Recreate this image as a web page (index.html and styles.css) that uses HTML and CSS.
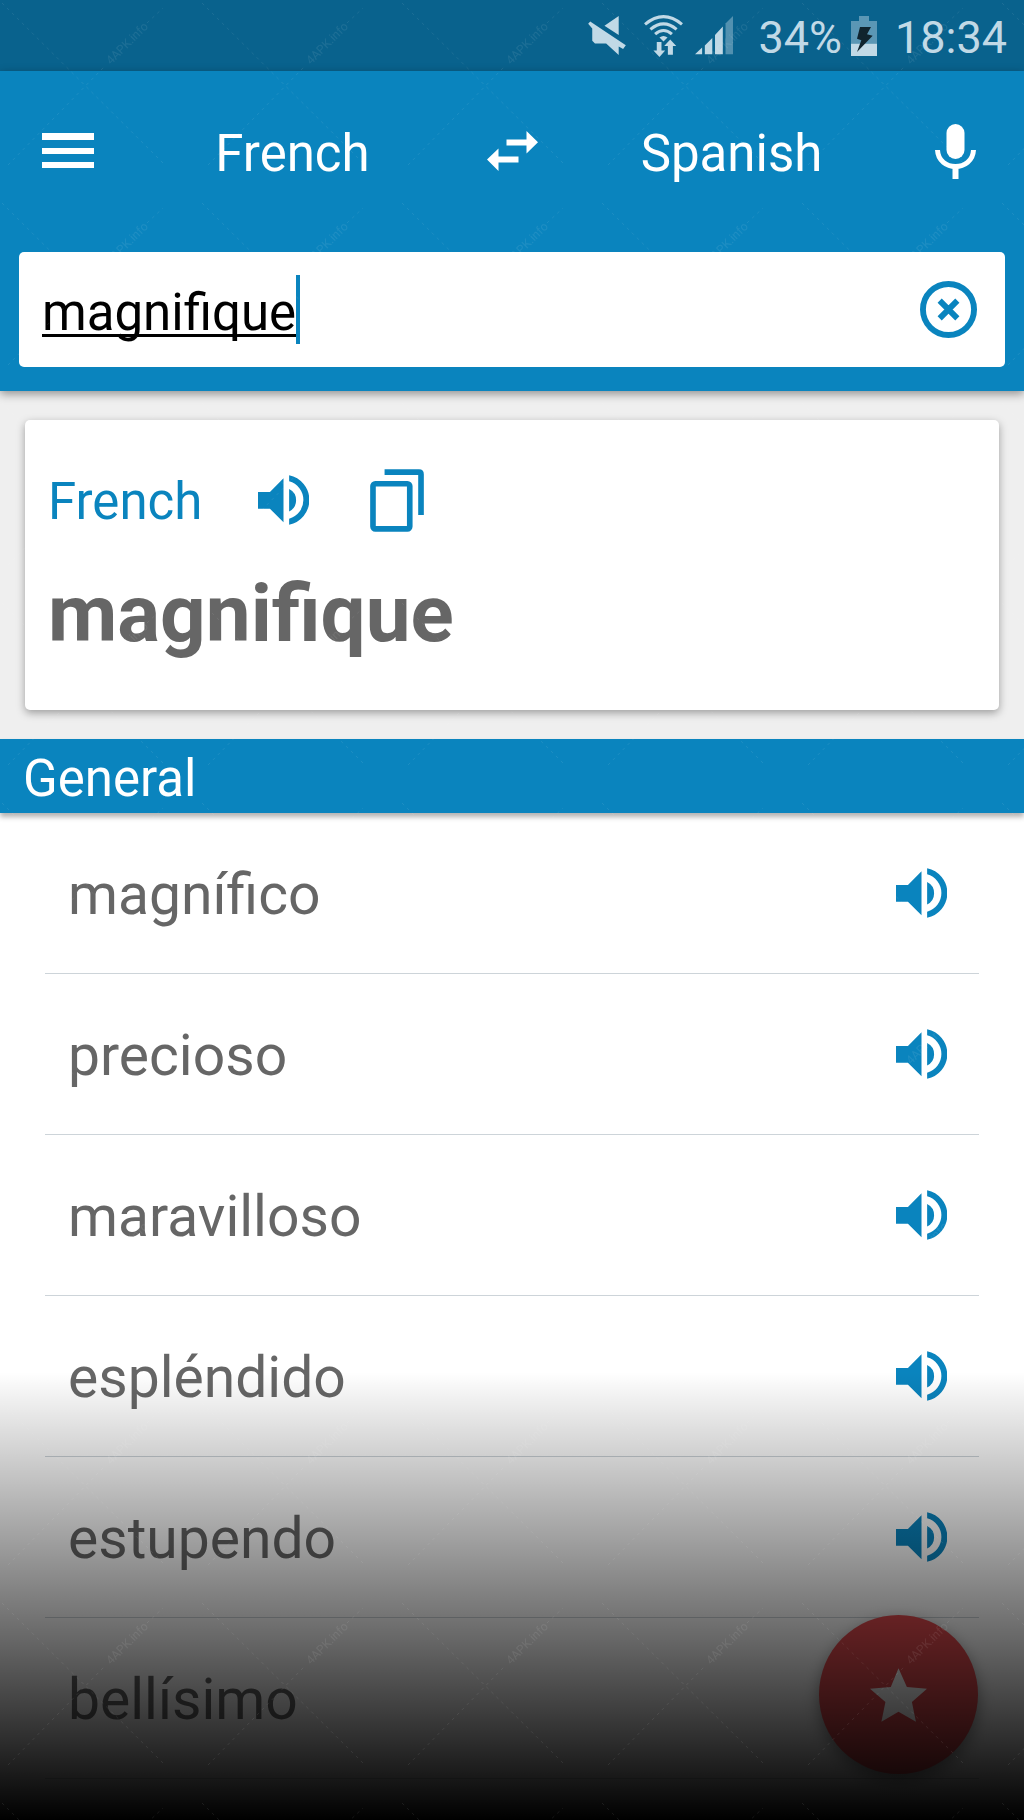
FILE: index.html
```html
<!DOCTYPE html>
<html lang="en">
<head>
<meta charset="utf-8">
<meta name="viewport" content="width=device-width, initial-scale=1">
<title>French – Spanish dictionary</title>
<link rel="stylesheet" href="styles.css">
</head>
<body>
<svg class="defs" width="0" height="0" aria-hidden="true">
  <symbol id="speaker" viewBox="0 0 154 149">
    <path d="M0 50H36L77 9V142L36 101H0ZM94 0A76 76 0 0 1 94 149V131A58.600 58.600 0 0 0 94 18ZM94 41A38 38 0 0 1 94 109Z"/>
  </symbol>
</svg>
<div class="screen">
  <div class="status">
    <svg class="status-mute" width="38" height="39" viewBox="0 0 111 115" aria-label="Muted"><path d="M90 0V56L48 29ZM6 16L111 86L103 97L90 90V115L53 81H20L12 73V37L0 23Z"/></svg>
    <svg class="status-wifi" width="39" height="42" viewBox="0 0 116 125" aria-label="Wi-Fi">
      <g fill="none" stroke="#c1d9e6" stroke-width="9"><path d="M3 28Q58 -18 113 28"/><path d="M19 43Q58 10 97 43"/><path d="M33 57Q58 35 83 57"/></g>
      <path d="M46 67Q58 58 70 67L58 79Z"/>
      <path d="M38 80H52V106H63L46 125L28 106H38ZM71 118V92H60L78 73L96 92H86V118Z"/>
    </svg>
    <svg class="status-signal" width="38" height="39" viewBox="0 0 112 115" aria-label="Signal"><path d="M0 113L21 93V113ZM29 87L51 65V113H29ZM59 56L82 31V113H59Z"/><path opacity=".4" d="M90 22L112 0V113H90Z"/></svg>
    <span class="status-battery-level">34%</span>
    <svg class="status-battery" width="26" height="40" viewBox="0 0 78 120" aria-label="Charging"><path opacity=".45" d="M24 0H54V15H78V83H0V15H24Z"/><path d="M0 83H78V120H0Z"/><path fill="#10242e" d="M27 33H60L48 55L65 59L18 108L31 73L18 68Z"/></svg>
    <time class="status-time">18:34</time>
  </div>

  <header class="header">
    <nav class="toolbar">
      <button class="icon-button toolbar-menu" aria-label="Menu"><svg width="52" height="36" viewBox="0 0 52 36"><path d="M0 0H52V7H0ZM0 15H52V21H0ZM0 29H52V35H0Z"/></svg></button>
      <button class="language">French</button>
      <button class="icon-button" aria-label="Swap languages"><svg width="51" height="40" viewBox="0 0 51 40"><path d="M19.500 8.500H39.500V0L51 11.300L39.500 22.500V14.500H19.500ZM31.500 31.500H11.500V40L0 28.500L11.500 17.500V25.500H31.500Z"/></svg></button>
      <button class="language">Spanish</button>
      <button class="icon-button toolbar-mic" aria-label="Voice input"><svg width="41" height="55" viewBox="0 0 41 55"><rect x="11.500" width="18" height="35" rx="9"/><path fill="none" stroke="#fff" stroke-width="5" d="M2.500 26C3.500 48 37.500 48 38.500 26"/><path d="M17.500 43H23.500V55H17.500Z"/></svg></button>
    </nav>
    <form class="search">
      <input class="search-input" type="text" value="magnifique" aria-label="Word to translate" spellcheck="false">
      <span class="caret"></span>
      <button class="icon-button search-clear" type="button" aria-label="Clear"><svg width="57" height="57" viewBox="0 0 58 58"><g fill="none" stroke="#0a84be"><circle cx="29" cy="29" r="26" stroke-width="6"/><path stroke-width="6" d="M20 20L38 38M38 20L20 38"/></g></svg></button>
    </form>
  </header>

  <main>
    <section class="card">
      <div class="card-top">
        <span class="card-language">French</span>
        <button class="icon-button card-action" aria-label="Listen"><svg width="51" height="50"><use href="#speaker"/></svg></button>
        <button class="icon-button card-action" aria-label="Copy"><svg width="54" height="63" viewBox="0 0 163 189"><g fill="none" stroke="#0a84be" stroke-width="17"><path d="M44 9H148Q154 9 154 15V138"/><rect x="9" y="44" width="111" height="136" rx="7"/></g></svg></button>
      </div>
      <h1 class="word">magnifique</h1>
    </section>

    <h2 class="category">General</h2>
    <ul class="results">
      <li class="result"><span>magnífico</span><button class="icon-button" aria-label="Listen to magnífico"><svg width="51" height="50"><use href="#speaker"/></svg></button></li>
      <li class="result"><span>precioso</span><button class="icon-button" aria-label="Listen to precioso"><svg width="51" height="50"><use href="#speaker"/></svg></button></li>
      <li class="result"><span>maravilloso</span><button class="icon-button" aria-label="Listen to maravilloso"><svg width="51" height="50"><use href="#speaker"/></svg></button></li>
      <li class="result"><span>espléndido</span><button class="icon-button" aria-label="Listen to espléndido"><svg width="51" height="50"><use href="#speaker"/></svg></button></li>
      <li class="result"><span>estupendo</span><button class="icon-button" aria-label="Listen to estupendo"><svg width="51" height="50"><use href="#speaker"/></svg></button></li>
      <li class="result"><span>bellísimo</span></li>
    </ul>
  </main>

  <button class="fab" aria-label="Favourites"><svg width="57" height="54" viewBox="271 260 170 160"><path d="M356 260L381 316L441 321L396 361L408 420L356 390L305 420L317 361L271 321L333 316Z"/></svg></button>
  <div class="fade"></div>
  <svg class="watermark" aria-hidden="true">
    <pattern id="mark" width="200" height="200" patternUnits="userSpaceOnUse">
      <path fill="none" stroke="#fff" stroke-width="1" stroke-dasharray="3 4" d="M2 3L165 165M8 165L105 66M147 23L163 8"/>
      <text x="111" y="65" transform="rotate(-45 111 65)" class="mark-text">4APK.info</text>
    </pattern>
    <rect width="100%" height="100%" fill="url(#mark)"/>
  </svg>
</div>
</body>
</html>
```
FILE: styles.css
```css
* {
  box-sizing: border-box;
}

body {
  margin: 0;
  font-family: Roboto, "Liberation Sans", sans-serif;
  font-size: 51px;
  line-height: 60px;
  color: #666;
}

button {
  margin: 0;
  padding: 0;
  border: 0;
  background: none;
  font: inherit;
  color: inherit;
}

svg {
  display: block;
  fill: currentColor;
}

.defs {
  position: absolute;
}

.screen {
  position: relative;
  min-height: 100vh;
  padding-bottom: 41px;
  background: #fff;
  overflow: hidden;
}

.icon-button {
  display: flex;
  align-items: center;
  justify-content: center;
  color: #0a84be;
}

/* Status bar */
.status {
  display: flex;
  align-items: center;
  justify-content: flex-end;
  height: 71px;
  padding-right: 17px;
  background: #09628d;
  color: #c1d9e6;
  font-size: 45px;
}

.status-mute {
  margin-right: 18px;
}

.status-wifi {
  margin-right: 12px;
}

.status-signal {
  margin-right: 25px;
}

.status-battery-level {
  margin-right: 9px;
  padding-top: 4px;
}

.status-battery {
  margin-right: 18px;
}

.status-time {
  padding-top: 4px;
}

/* Header */
.header {
  position: relative;
  padding-bottom: 24px;
  background: #0a84be;
  color: #fff;
  box-shadow: 0 3px 9px rgba(0, 0, 0, 0.4);
}

.toolbar {
  display: grid;
  grid-template-columns: 183fr 219fr 220fr 219fr 183fr;
  align-items: center;
  height: 160px;
}

.toolbar .icon-button {
  color: #fff;
}

.toolbar .toolbar-menu {
  justify-content: flex-start;
  padding-left: 42px;
}

.toolbar .toolbar-mic {
  justify-content: flex-end;
  padding-right: 48px;
}

.language {
  padding-top: 6px;
}

.search {
  display: flex;
  align-items: center;
  height: 115px;
  margin: 21px 19px 0;
  padding: 0 28px 0 23px;
  border-radius: 5px;
  background: #fff;
}

.search-input {
  field-sizing: content;
  min-width: 0;
  padding: 6px 0 0;
  border: 0;
  outline: 0;
  background: none;
  font: inherit;
  color: #000;
  text-decoration: underline 3px;
  text-decoration-skip-ink: none;
  text-underline-offset: 4px;
}

.caret {
  width: 4px;
  height: 69px;
  background: #0a84be;
}

.search-clear {
  margin-left: auto;
}

/* Word card */
main {
  padding-top: 29px;
  background: #efefef;
}

.card {
  margin: 0 25px;
  padding: 48px 23px 36px;
  border-radius: 5px;
  background: #fff;
  box-shadow: 0 3px 8px rgba(0, 0, 0, 0.35);
}

.card-top {
  display: flex;
  align-items: center;
  gap: 48px;
}

.card-language {
  padding-top: 4px;
  color: #0a84be;
}

.card-action {
  width: 66px;
}

.word {
  margin: 22px 0 0;
  font-size: 80px;
  line-height: 120px;
}

/* Results */
.category {
  position: relative;
  margin: 29px 0 0;
  padding: 10px 23px 4px;
  background: #0a84be;
  color: #fff;
  font-size: 51px;
  font-weight: 400;
  box-shadow: 0 4px 5px rgba(0, 0, 0, 0.3);
}

.results {
  margin: 0;
  padding: 0 45px;
  list-style: none;
  background: #fff;
}

.result {
  display: flex;
  align-items: center;
  justify-content: space-between;
  height: 161px;
  padding: 0 32px 0 23px;
  border-bottom: 1px solid #cdd4d9;
  font-size: 57px;
}

.result span {
  padding-top: 4px;
}

/* Layers over the list */
.fab {
  position: absolute;
  right: 46px;
  bottom: 46px;
  display: flex;
  align-items: center;
  justify-content: center;
  width: 159px;
  height: 159px;
  border-radius: 50%;
  background: #e04a4e;
  color: #fff;
  box-shadow: 0 6px 16px rgba(0, 0, 0, 0.4);
}

.fade {
  position: absolute;
  right: 0;
  bottom: 0;
  left: 0;
  height: 448px;
  background: linear-gradient(transparent, #000);
  pointer-events: none;
}

.watermark {
  position: absolute;
  inset: 0;
  width: 100%;
  height: 100%;
  opacity: 0.08;
  pointer-events: none;
}

.mark-text {
  fill: #fff;
  font-size: 12px;
}
```
